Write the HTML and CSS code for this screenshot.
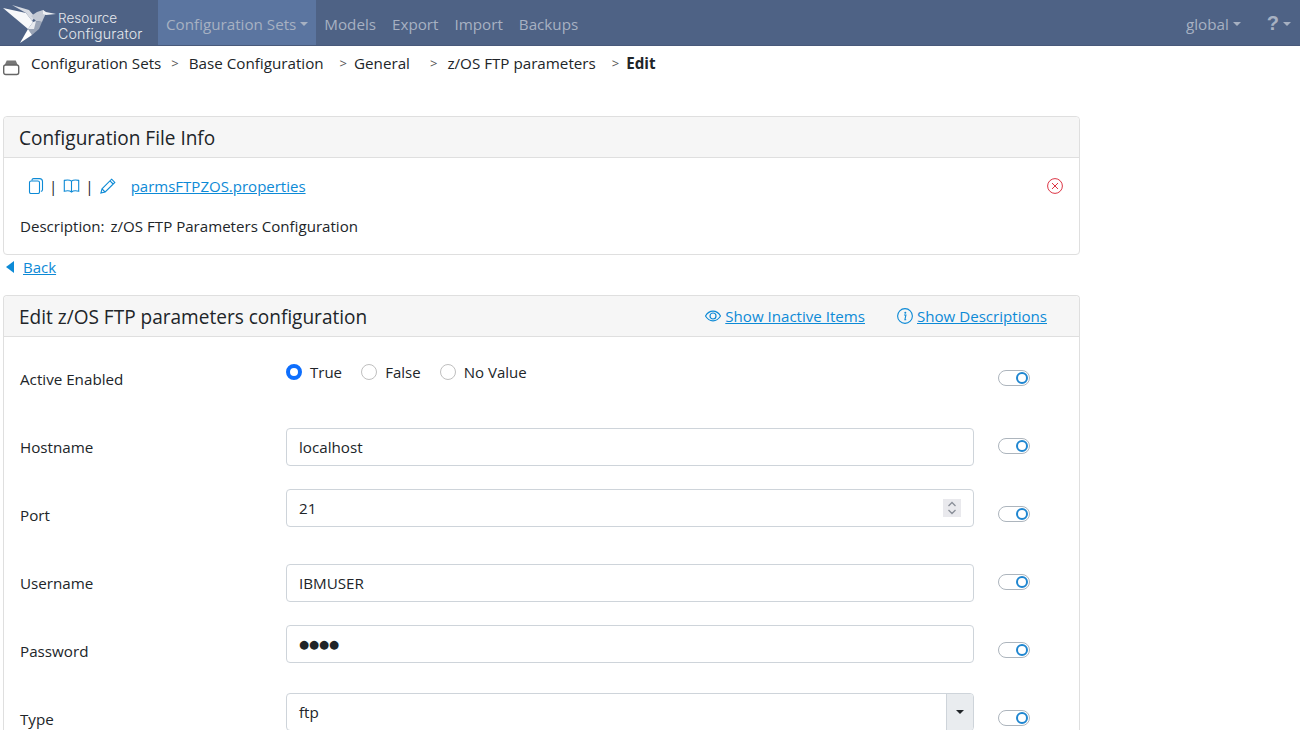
FILE: index.html
```html
<!DOCTYPE html>
<html lang="en">
<head>
<meta charset="utf-8">
<title>Resource Configurator</title>
<link rel="stylesheet" href="styles.css">
</head>
<body>
<nav class="navbar">
  <a class="brand">
    <svg class="bird" viewBox="0 0 56 42" width="56" height="42">
      <path d="M1 6 L24 11 L31 20 L26 27 Z" fill="#f7f8fa"/>
      <path d="M10 3 L27 8 L33 15 L30 19 L24 11 Z" fill="#d6dae2"/>
      <path d="M29 14 L35 10 L41 8 L44 11 L40 20 L34 19 Z" fill="#c3c9d4"/>
      <path d="M41 8 L44 10 L54 12 L44 13 L41 12 Z" fill="#eef0f3"/>
      <path d="M26 27 L34 19 L40 20 L37 27 L30 33 Z" fill="#9aa4b6"/>
      <path d="M26 27 L30 33 L18 41 Z" fill="#ffffff"/>
      <path d="M31 20 L34 19 L32 27 L26 27 Z" fill="#e9ebef"/>
    </svg>
    <span class="brand-text"><span class="bl1">Resource</span><span class="bl2">Configurator</span></span>
  </a>
  <a class="nav-item active">Configuration Sets<span class="caret"></span></a>
  <a class="nav-item">Models</a>
  <a class="nav-item">Export</a>
  <a class="nav-item">Import</a>
  <a class="nav-item">Backups</a>
  <span class="spacer"></span>
  <a class="nav-item global">global<span class="caret"></span></a>
  <a class="nav-item help"><span class="q">?</span><span class="caret"></span></a>
</nav>

<div class="crumbs">
  <svg class="stack" viewBox="0 0 18 16" width="18" height="16"><path d="M3.700 .5h9l2 4.500h-13z" fill="#777"/><rect x=".7" y="5" width="15" height="9.500" rx="2" fill="none" stroke="#666" stroke-width="1.400"/></svg>
  <span class="c1">Configuration Sets</span><span class="sep s1">&gt;</span>
  <span class="c2">Base Configuration</span><span class="sep s2">&gt;</span>
  <span class="c3">General</span><span class="sep s3">&gt;</span>
  <span class="c4">z/OS FTP parameters</span><span class="sep s4">&gt;</span>
  <strong>Edit</strong>
</div>

<main class="content">
  <section class="card info">
    <header class="card-head"><h2>Configuration File Info</h2></header>
    <div class="info-body">
      <div class="file-row">
        <svg class="ico" viewBox="0 0 16 16" width="16" height="16"><rect x="1.500" y="3" width="10" height="12.500" rx="1.600" fill="none" stroke="#0d8ad6" stroke-width="1.100"/><path d="M4 2.600V2.200C4 1.200 4.800 .6 5.600 .6h5.900c2 0 3 1 3 3v8.200c0 1-.6 1.600-1.600 1.600" fill="none" stroke="#0d8ad6" stroke-width="1.100"/></svg>
        <span class="bar b1">|</span>
        <svg class="ico book" viewBox="0 0 16 16" width="17" height="16"><path d="M8 3.200C6.600 2 3.400 1.800 .8 2.400v10.800c2.600-.6 5.800-.4 7.200 .8 1.400-1.200 4.600-1.400 7.200-.8V2.400C12.600 1.800 9.400 2 8 3.200zM8 3.200V14" fill="none" stroke="#0d8ad6" stroke-width="1.100"/></svg>
        <span class="bar b2">|</span>
        <svg class="ico pen" viewBox="0 0 16 16" width="16" height="16"><path d="M11.600 1.200l3.200 3.200-9.600 9.600-4.300 1.100 1.100-4.300zM10 2.900l3.100 3.100M2 10.900l3.100 3.100" fill="none" stroke="#0d8ad6" stroke-width="1.100"/></svg>
        <a class="link file">parmsFTPZOS.properties</a>
        <svg class="close" viewBox="0 0 16 16" width="16" height="16"><circle cx="8" cy="8" r="7.400" fill="none" stroke="#dc3545" stroke-width="1"/><path d="M5 5l6 6M11 5l-6 6" stroke="#dc3545" stroke-width="1"/></svg>
      </div>
      <p class="desc"><span class="desc-key">Description:</span> z/OS FTP Parameters Configuration</p>
    </div>
  </section>

  <div class="back"><span class="back-arrow"></span><a class="link">Back</a></div>

  <section class="card edit">
    <header class="card-head edit-head">
      <h2>Edit z/OS FTP parameters configuration</h2>
      <div class="head-links">
        <svg class="ico" viewBox="0 0 16 16" width="16" height="16"><path d="M.5 8C2.400 4.800 5 3.200 8 3.200s5.600 1.600 7.500 4.800C13.600 11.200 11 12.800 8 12.800S2.400 11.200 .5 8z" fill="none" stroke="#0d8ad6" stroke-width="1.200"/><circle cx="8" cy="8" r="3" fill="none" stroke="#0d8ad6" stroke-width="1.200"/></svg>
        <a class="link inactive">Show Inactive Items</a>
        <svg class="ico info-ico" viewBox="0 0 16 16" width="16" height="16"><circle cx="8" cy="8" r="7.400" fill="none" stroke="#0d8ad6" stroke-width="1.100"/><circle cx="8.300" cy="4.700" r="1" fill="#0d8ad6"/><path d="M7 7h1.900l-1 4.700h1.300" fill="none" stroke="#0d8ad6" stroke-width="1.100"/></svg>
        <a class="link">Show Descriptions</a>
      </div>
    </header>
    <div class="form">
      <div class="row row-radio">
        <label class="lbl">Active Enabled</label>
        <div class="ctl radios">
          <span class="radio on"></span><span class="rl">True</span>
          <span class="radio"></span><span class="rl">False</span>
          <span class="radio"></span><span class="rl">No Value</span>
        </div>
        <span class="toggle"></span>
      </div>
      <div class="row r2">
        <label class="lbl">Hostname</label>
        <div class="ctl"><div class="input">localhost</div></div>
        <span class="toggle"></span>
      </div>
      <div class="row r3">
        <label class="lbl">Port</label>
        <div class="ctl"><div class="input">21<span class="spin"><svg viewBox="0 0 18 18" width="18" height="18"><path d="M5.500 7L9 3.500 12.500 7M5.500 11L9 14.500 12.500 11" fill="none" stroke="#8a8f98" stroke-width="1.300"/></svg></span></div></div>
        <span class="toggle"></span>
      </div>
      <div class="row r4">
        <label class="lbl">Username</label>
        <div class="ctl"><div class="input">IBMUSER</div></div>
        <span class="toggle"></span>
      </div>
      <div class="row r5">
        <label class="lbl">Password</label>
        <div class="ctl"><div class="input pw">●●●●</div></div>
        <span class="toggle"></span>
      </div>
      <div class="row r6">
        <label class="lbl">Type</label>
        <div class="ctl"><div class="input select">ftp<span class="sel-btn"><span class="sel-caret"></span></span></div></div>
        <span class="toggle"></span>
      </div>
    </div>
  </section>
</main>
</body>
</html>
```
FILE: styles.css
```css
* { box-sizing: border-box; }
html, body { height: 100%; }
body {
  margin: 0;
  height: 730px;
  overflow: hidden;
  background: #fff;
  color: #212529;
  font-family: "Open Sans", "Noto Sans", sans-serif;
  font-size: 15.2px;
}
.navbar {
  display: flex;
  align-items: stretch;
  height: 46px;
  padding-top: 2px;
  background: #4e6285;
  border-bottom: 1px solid #48597a;
  color: #a7b1c2;
}
.brand { display: flex; width: 158px; margin-top: -1px; padding: 1px 0 0 2px; }
.bird { flex: none; }
.brand-text {
  margin: 9px 0 0 0;
  color: #e4e7ec;
  font-family: "Inter", sans-serif;
  font-weight: 300;
  line-height: 15px;
}
.bl1 { display: block; font-size: 13.500px; }
.bl2 { display: block; font-size: 14.200px; letter-spacing: .15px; }
.nav-item {
  display: flex;
  align-items: center;
  padding: 0 8px;
}
.nav-item.active { background: #5b75a0; margin-top: -2px; padding-top: 2px; }
.spacer { flex: 1; }
.caret {
  width: 0; height: 0;
  margin-left: 4px;
  border-top: 4px solid currentColor;
  border-left: 4px solid transparent;
  border-right: 4px solid transparent;
}
.global { padding-right: 18px; }
.help { padding: 0 9px 0 8px; }
.q { font-size: 20px; font-weight: 600; font-family: "Liberation Sans", sans-serif; }

.crumbs {
  display: flex;
  align-items: center;
  height: 34px;
  padding-left: 3px;
  color: #212529;
  white-space: nowrap;
}
.stack { margin: 10px 10px 0 0; }
.sep { color: #555; font-size: 13px; }
.s1 { margin: 0 10px; }
.s2 { margin: 0 7px 0 16px; }
.s3 { margin: 0 10px 0 20px; }
.s4 { margin: 0 7px 0 16px; }

.content { width: 1077px; margin: 36px 0 0 3px; }
.card {
  border: 1px solid #dfdfdf;
  border-radius: 4px;
  background: #fff;
}
.card-head {
  display: flex;
  align-items: center;
  height: 41px;
  padding: 2px 16px 0 15px;
  background: #f6f6f6;
  border-bottom: 1px solid #dfdfdf;
  border-radius: 4px 4px 0 0;
}
h2 { margin: 0; font-size: 19.050px; font-weight: 400; color: #212529; }
.info-body { padding: 0 16px; height: 96px; }
.file-row { display: flex; align-items: center; height: 56px; padding: 0 0 0 8px; }
.bar { color: #212529; }
.b1 { margin: 0 6px 0 5px; }
.b2 { margin: 0 6px 0 5px; }
.file { margin-left: 15px; font-size: 15px; }
.close { margin-left: auto; }
.link { color: #0d8ad6; text-decoration: underline; }
.desc { margin: 2px 0 0; font-size: 15.100px; }
.desc-key { margin-right: 2px; }
.back { display: flex; align-items: center; height: 25px; padding: 0 0 2px 3px; font-size: 15px; }
.back-arrow {
  width: 0; height: 0;
  margin-right: 9px;
  border-right: 8px solid #0d8ad6;
  border-top: 6px solid transparent;
  border-bottom: 6px solid transparent;
}
.edit { margin-top: 15px; border-bottom: 0; border-radius: 4px 4px 0 0; height: 500px; }
.edit-head { justify-content: space-between; }
.head-links { display: flex; align-items: center; padding-right: 16px; margin-top: -2px; font-size: 15.100px; }
.inactive { margin: 0 32px 0 4px; }
.info-ico { margin-right: 4px; }

.form { padding: 0 16px; }
.row { display: flex; align-items: flex-start; height: 68px; }
.lbl { width: 266px; flex: none; margin-top: 32px; }
.ctl { width: 688px; flex: none; }
.toggle {
  position: relative;
  flex: none;
  width: 32px;
  height: 16px;
  margin: 33px 0 0 24px;
  border: 1px solid #adb5bd;
  border-radius: 8px;
  background: #fff;
}
.toggle::after {
  content: "";
  box-sizing: border-box;
  position: absolute;
  right: 1px;
  top: 1px;
  width: 12px;
  height: 12px;
  border: 2px solid #1f86d0;
  border-radius: 50%;
  background: #fff;
}
.radios { display: flex; align-items: center; height: 20px; margin-top: 25px; }
.radio {
  width: 16px; height: 16px;
  border: 1px solid #bfbfbf;
  border-radius: 50%;
  background: #fff;
}
.radio.on { border: 4.500px solid #0d6efd; }
.rl { margin: 0 19.200px 0 8px; font-size: 15px; }
.input {
  position: relative;
  display: flex;
  align-items: center;
  height: 38px;
  padding: 0 12px;
  border: 1px solid #ced4da;
  border-radius: 4px;
  background: #fff;
  margin-top: 23px;
}
.spin {
  position: absolute;
  right: 12px;
  top: 9px;
  width: 18px;
  height: 18px;
  background: #e9e9ed;
}
.spin svg { display: block; }
.pw { font-family: "DejaVu Sans", sans-serif; font-size: 11.500px; }
.sel-btn {
  position: absolute;
  right: 0;
  top: 0;
  bottom: 0;
  width: 27px;
  display: flex;
  align-items: center;
  justify-content: center;
  background: #e9ecef;
  border-left: 1px solid #ced4da;
  border-radius: 0 3px 3px 0;
}
.sel-caret {
  border-top: 4px solid #212529;
  border-left: 4px solid transparent;
  border-right: 4px solid transparent;
}
.r3 .input, .r5 .input, .r6 .input { margin-top: 16px; }
```
